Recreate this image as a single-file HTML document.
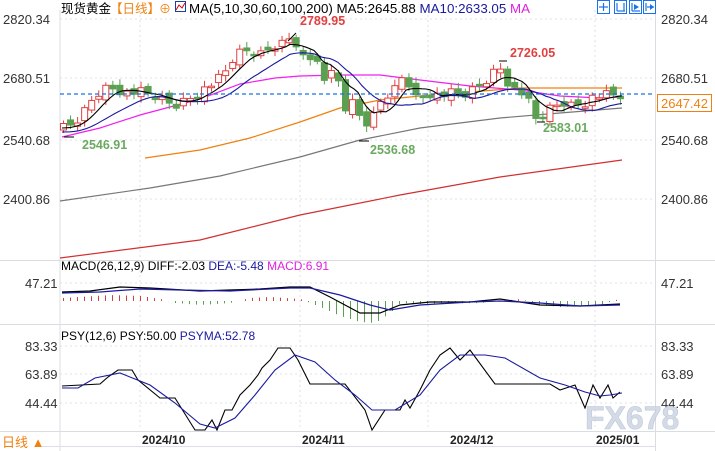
<!DOCTYPE html>
<html><head><meta charset="utf-8"><style>
body{margin:0;background:#fff;width:715px;height:451px;overflow:hidden;font-family:"Liberation Sans","Noto Sans CJK SC",sans-serif}
svg{display:block}
text{font-family:"Liberation Sans","Noto Sans CJK SC",sans-serif}
</style></head><body>
<svg id="s" width="715" height="451" xmlns="http://www.w3.org/2000/svg">
<rect width="715" height="451" fill="#fff"/>
<g stroke="#dde0e4" stroke-dasharray="2,3" stroke-width="1">
<line x1="60" y1="19" x2="655" y2="19"/><line x1="60" y1="78" x2="655" y2="78"/><line x1="60" y1="140" x2="655" y2="140"/><line x1="60" y1="199" x2="655" y2="199"/>
<line x1="60" y1="283" x2="655" y2="283"/><line x1="60" y1="346" x2="655" y2="346"/><line x1="60" y1="374" x2="655" y2="374"/><line x1="60" y1="403" x2="655" y2="403"/>
<line x1="140" y1="10" x2="140" y2="430"/><line x1="300" y1="10" x2="300" y2="430"/><line x1="428" y1="10" x2="428" y2="430"/><line x1="595" y1="10" x2="595" y2="430"/>
</g>
<g stroke="#d8dde2" stroke-width="1">
<line x1="60" y1="10" x2="60" y2="451"/><line x1="655.5" y1="10" x2="655.5" y2="451"/>
<line x1="0" y1="260.5" x2="715" y2="260.5"/><line x1="0" y1="324.5" x2="715" y2="324.5"/><line x1="0" y1="431.5" x2="715" y2="431.5"/>
</g>
<g id="main"></g>
<line x1="60" y1="94" x2="655" y2="94" stroke="#1a73e8" stroke-dasharray="4,3" stroke-width="1.2"/>
<rect x="657.5" y="94.5" width="54" height="17" fill="#fff" stroke="#f08010"/>
<text x="661" y="108" font-size="13" fill="#f08010">2647.42</text>
<g font-size="13" fill="#333">
<text x="3" y="24">2820.34</text><text x="3" y="83">2680.51</text><text x="3" y="145">2540.68</text><text x="3" y="204">2400.86</text>
<text x="661" y="24">2820.34</text><text x="661" y="83">2680.51</text><text x="661" y="145">2540.68</text><text x="661" y="204">2400.86</text>
<text x="25" y="288">47.21</text><text x="661" y="288">47.21</text>
<text x="25" y="351">83.33</text><text x="25" y="379">63.89</text><text x="25" y="408">44.44</text>
<text x="661" y="351">83.33</text><text x="661" y="379">63.89</text><text x="661" y="408">44.44</text>
</g>
<text x="61" y="13" font-size="12.5" fill="#000">现货黄金</text>
<text x="110" y="13" font-size="12.5" fill="#f08010">【日线】</text>
<text x="159" y="13" font-size="12" fill="#f08010">⊕</text>
<rect x="175.5" y="1.5" width="10" height="10" fill="#fff" stroke="#1a3fa0"/><polyline points="176,10 179,5 182,8 185,3" fill="none" stroke="#d00" stroke-width="1"/>
<text x="189" y="13" font-size="12.5" fill="#000" textLength="341" lengthAdjust="spacingAndGlyphs">MA(5,10,30,60,100,200) MA5:2645.88 <tspan fill="#1a1aa0">MA10:2633.05</tspan> <tspan fill="#e020e0">MA</tspan></text>
<g fill="none" stroke="#1a73e8"><rect x="597.5" y="0.5" width="12" height="13"/><rect x="614.5" y="0.5" width="12" height="13"/><rect x="629.5" y="0.5" width="12" height="13"/><rect x="643.5" y="0.5" width="12" height="13"/></g>
<g stroke="#1a73e8" stroke-width="1.2"><line x1="603.5" y1="3" x2="603.5" y2="11"/><line x1="599" y1="7" x2="608" y2="7"/><line x1="617" y1="11" x2="625" y2="11"/><line x1="617" y1="3" x2="617" y2="11"/><line x1="624" y1="3" x2="624" y2="11"/><line x1="632" y1="3" x2="632" y2="11"/><line x1="632" y1="11" x2="640" y2="11"/><line x1="646" y1="3" x2="646" y2="11"/><line x1="647" y1="7" x2="654" y2="7"/></g>
<path d="M634 4 L639 7 L634 10Z M650 4 L654 7 L650 10Z" fill="#1a73e8"/>
<g font-size="12.5" font-weight="bold">
<text x="300" y="25" fill="#e04040">2789.95</text>
<text x="510" y="57" fill="#e04040">2726.05</text>
<text x="82" y="149" fill="#6aaa60">2546.91</text>
<text x="370" y="154" fill="#6aaa60">2536.68</text>
<text x="543" y="132" fill="#6aaa60">2583.01</text>
</g>
<g stroke="#000" stroke-width="1"><line x1="64" y1="137" x2="74" y2="137"/><line x1="288" y1="41" x2="296" y2="33"/><line x1="359" y1="141" x2="369" y2="141"/><line x1="499" y1="61" x2="507" y2="61"/><line x1="537" y1="122" x2="545" y2="122"/></g>
<text x="61" y="270" font-size="12" fill="#000">MACD(26,12,9) DIFF:-2.03 <tspan fill="#1a1aa0">DEA:-5.48</tspan> <tspan fill="#e020e0">MACD:6.91</tspan></text>
<text x="61" y="340" font-size="12" fill="#000">PSY(12,6) PSY:50.00 <tspan fill="#1a1aa0">PSYMA:52.78</tspan></text>
<g id="macd"></g>
<g id="psy"></g>
<text x="585" y="429" font-size="32" fill="#d0d8e4" stroke="#b8c4d4" stroke-width="0.6" font-weight="bold" opacity="0.9">FX678</text>
<text x="2" y="447" font-size="13" fill="#f08010">日线 ▲</text>
<g font-size="12" font-weight="bold" fill="#222">
<text x="142" y="444">2024/10</text><text x="302" y="444">2024/11</text><text x="450" y="444">2024/12</text><text x="596" y="444">2025/01</text>
</g>
<line x1="42" y1="446.5" x2="655" y2="446.5" stroke="#dde"/>
</svg>
<script>
(function(){
var NS="http://www.w3.org/2000/svg";
function el(p,t,a){var e=document.createElementNS(NS,t);for(var k in a)e.setAttribute(k,a[k]);p.appendChild(e);return e;}
function interp(pts,x){for(var i=0;i<pts.length-1;i++){if(x>=pts[i][0]&&x<=pts[i+1][0]){var t=(x-pts[i][0])/(pts[i+1][0]-pts[i][0]);return pts[i][1]+t*(pts[i+1][1]-pts[i][1]);}}return x<pts[0][0]?pts[0][1]:pts[pts.length-1][1];}
function pl(g,pts,c,w){el(g,"polyline",{points:pts.map(function(p){return p.join(",")}).join(" "),fill:"none",stroke:c,"stroke-width":w||1});}
var m=document.getElementById("main");
pl(m,[[60,258],[200,240],[300,215],[400,195],[500,177],[622,160]],"#d03030",1.2);
pl(m,[[60,201],[150,188],[220,176],[300,157],[360,140],[420,128],[500,118],[560,113],[622,108]],"#777",1.2);
pl(m,[[145,158],[200,150],[250,138],[300,122],[340,108],[380,100],[420,96],[470,92],[520,88],[570,88],[622,88]],"#f08010",1.2);
pl(m,[[62,137],[100,128],[140,115],[200,99],[240,84],[275,78],[300,76],[340,75],[380,75],[420,80],[470,86],[520,90],[560,96],[600,98],[622,97]],"#f020f0",1.2);
var closes=[[63,128],[70,126],[80,118],[88,105],[95,95],[105,88],[115,88],[125,93],[140,92],[155,97],[165,102],[175,105],[185,100],[195,95],[205,88],[215,82],[225,72],[232,60],[240,52],[250,50],[258,55],[266,50],[275,44],[282,42],[290,36],[297,55],[305,56],[315,58],[322,85],[330,65],[337,80],[345,110],[352,95],[360,120],[365,125],[372,120],[378,105],[385,97],[392,92],[398,85],[405,70],[412,97],[420,98],[430,93],[440,96],[450,93],[460,97],[470,92],[478,85],[486,80],[493,72],[500,68],[506,80],[512,88],[520,92],[527,98],[533,120],[540,118],[547,110],[555,106],[562,102],[570,105],[578,104],[586,102],[593,96],[600,96],[607,95],[614,96],[621,96]];
var prev=130,i,x,y;
for(i=0;i<80;i++){x=63+i*7.05;y=interp(closes,x)+((i*37%11)-5)*0.9;
var o=prev,c=y;var up=c<o;var tp=Math.min(o,c),bt=Math.max(o,c);if(bt-tp<1.5)bt=tp+1.5;
var col=up?"#e04040":"#5aa050";
el(m,"line",{x1:x+0.5,x2:x+0.5,y1:tp-3-(i%3)*1.5,y2:bt+3+(i%4),stroke:col});
el(m,"rect",{x:x-2.5,y:tp,width:6,height:bt-tp,fill:up?"#fff":col,stroke:col});
prev=c+((i*53%7)-3)*1.2;}
var s5=[],s10=[];
for(x=62;x<=622;x+=4){var a=0,b=0,k;for(k=0;k<5;k++)a+=interp(closes,x-k*7);for(k=0;k<10;k++)b+=interp(closes,x-k*7);s5.push([x,(a/5).toFixed(1)]);s10.push([x,(b/10+4).toFixed(1)]);}
pl(m,s10,"#1a1aa0",1.1);pl(m,s5,"#000",1.1);
var g=document.getElementById("macd");
var bars=[[62,-3],[110,-6],[140,-5],[160,-2],[175,2],[200,4],[230,2],[250,-3],[270,-4],[300,-2],[320,6],[340,15],[360,21],[375,22],[390,12],[400,2],[420,3],[480,2],[520,-2],[540,4],[560,6],[600,4],[622,-3]];
for(x=63;x<=622;x+=7){var v=interp(bars,x);el(g,"line",{x1:x+.5,x2:x+.5,y1:301,y2:301+v,stroke:v<0?"#d04040":"#5aa050"});}
pl(g,[[62,292],[90,291],[120,287],[150,288],[200,291],[230,290],[260,289],[290,287],[310,287],[330,297],[360,313],[380,313],[400,305],[430,302],[470,302],[500,299],[520,302],[540,305],[580,306],[620,304]],"#000",1.2);
pl(g,[[62,293],[100,292],[140,289],[180,290],[230,291],[290,288],[310,288],[340,295],[370,305],[390,310],[420,305],[470,302],[500,301],[540,303],[580,306],[620,305]],"#1a1aa0",1.2);
var p=document.getElementById("psy");
pl(p,[[62,386],[100,384],[108,377],[118,370],[132,370],[138,380],[160,398],[175,398],[195,430],[205,430],[212,420],[217,430],[225,410],[232,410],[240,395],[250,385],[258,375],[262,368],[270,360],[278,348],[290,348],[298,360],[310,384],[345,384],[365,410],[372,430],[385,410],[400,410],[405,400],[410,408],[420,390],[430,370],[440,355],[450,348],[460,360],[470,350],[495,384],[550,384],[560,390],[575,385],[585,408],[593,385],[600,398],[608,385],[613,398],[620,392]],"#000",1.1);
pl(p,[[62,388],[78,388],[95,378],[120,373],[150,385],[175,403],[200,424],[215,428],[235,418],[255,395],[275,370],[295,355],[315,362],[335,380],[355,395],[372,410],[395,410],[420,395],[440,370],[460,355],[485,355],[505,358],[540,378],[565,385],[585,392],[600,396],[610,395],[622,393]],"#1a1aa0",1.1);
})();
</script>
</body></html>
